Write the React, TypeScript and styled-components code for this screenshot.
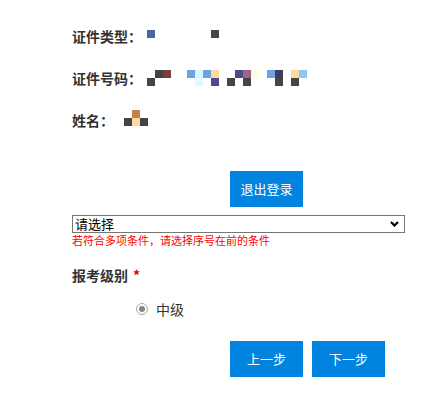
import React from "react";
import styled, { createGlobalStyle } from "styled-components";

const GlobalStyle = createGlobalStyle`
  html, body {
    margin: 0;
    padding: 0;
    background: #ffffff;
  }
  body {
    font-family: "Noto Sans CJK SC", "Noto Sans", sans-serif;
    color: #333333;
  }
  * { box-sizing: border-box; }
`;

const Page = styled.div`
  display: flex;
  flex-direction: column;
  padding: 26px 0 16px 72px;
  width: 442px;
`;

const InfoList = styled.div`
  display: flex;
  flex-direction: column;
  gap: 22px;
`;

const InfoRow = styled.div`
  display: flex;
  align-items: flex-start;
  height: 20px;
`;

const Label = styled.span`
  font-size: 14px;
  font-weight: 700;
  line-height: 20px;
  color: #333333;
  white-space: nowrap;
`;

const Pixels = styled.div<{ $cols: number; $left: number; $top: number }>`
  display: grid;
  grid-template-columns: repeat(${(p) => p.$cols}, 8px);
  grid-auto-rows: 8px;
  margin-left: ${(p) => p.$left}px;
  margin-top: ${(p) => p.$top}px;
`;

const Cell = styled.span<{ $c: number; $r: number; $color: string }>`
  grid-column: ${(p) => p.$c + 1};
  grid-row: ${(p) => p.$r + 1};
  background: ${(p) => p.$color};
`;

const ActionRow = styled.div<{ $top: number }>`
  display: flex;
  gap: 9px;
  padding-left: 158px;
  margin-top: ${(p) => p.$top}px;
`;

const Button = styled.button`
  width: 73px;
  height: 36px;
  border: none;
  padding: 0;
  background: #0084e0;
  color: #ffffff;
  font-family: "Noto Sans CJK SC", sans-serif;
  font-size: 13px;
  line-height: 36px;
  cursor: pointer;
`;

const Select = styled.select`
  margin-top: 8px;
  width: 333px;
  height: 18px;
  border: 1px solid #767676;
  border-radius: 0;
  padding: 0 0 0 2px;
  font-family: "Noto Sans CJK SC", sans-serif;
  font-size: 13px;
  line-height: 16px;
  color: #000000;
  background-color: #ffffff;
  appearance: none;
  -webkit-appearance: none;
  background-image: url("data:image/svg+xml;utf8,<svg xmlns='http://www.w3.org/2000/svg' width='9' height='6' viewBox='0 0 9 6'><polyline points='1,1 4.5,4.5 8,1' fill='none' stroke='black' stroke-width='2.2'/></svg>");
  background-repeat: no-repeat;
  background-position: right 5px center;
  outline: none;
`;

const Hint = styled.div`
  font-size: 11px;
  line-height: 14px;
  color: #ff0000;
  white-space: nowrap;
`;

const SectionTitle = styled.div`
  margin-top: 18px;
  font-size: 14px;
  font-weight: 700;
  line-height: 20px;
  color: #333333;
`;

const Required = styled.span`
  color: #e00000;
  margin-left: 5px;
`;

const RadioRow = styled.label`
  display: flex;
  align-items: center;
  gap: 8px;
  height: 20px;
  margin-top: 14px;
  padding-left: 64px;
  font-size: 14px;
  line-height: 20px;
  color: #333333;
`;

const RadioMark = styled.span`
  width: 12px;
  height: 12px;
  border-radius: 50%;
  border: 1px solid #a8a8a8;
  background: #ffffff;
  display: flex;
  align-items: center;
  justify-content: center;
  &::after {
    content: "";
    width: 6px;
    height: 6px;
    border-radius: 50%;
    background: #858585;
  }
`;

type Px = [number, number, string];

const typeCells: Px[] = [
  [0, 0, "#4b64a2"],
  [8, 0, "#454545"],
];

const idCells: Px[] = [
  [1, 0, "#444444"],
  [2, 0, "#7b3d3d"],
  [5, 0, "#6da3de"],
  [6, 0, "#d5f6ff"],
  [7, 0, "#6da3de"],
  [8, 0, "#fdd9a0"],
  [11, 0, "#4b4a8c"],
  [12, 0, "#a0628a"],
  [13, 0, "#fffbdc"],
  [15, 0, "#6da3de"],
  [16, 0, "#3d3d5c"],
  [18, 0, "#fdd9a0"],
  [19, 0, "#8cc4f8"],
  [0, 1, "#444444"],
  [6, 1, "#e0fbff"],
  [8, 1, "#4b4a8c"],
  [10, 1, "#444444"],
  [12, 1, "#444444"],
  [16, 1, "#444444"],
  [18, 1, "#444444"],
];

const nameCells: Px[] = [
  [1, 0, "#c2824a"],
  [0, 1, "#444444"],
  [1, 1, "#fddba0"],
  [2, 1, "#444444"],
];

const PixelValue = ({ cells, cols, left, top }: { cells: Px[]; cols: number; left: number; top: number }) => (
  <Pixels $cols={cols} $left={left} $top={top}>
    {cells.map(([c, r, color], i) => (
      <Cell key={i} $c={c} $r={r} $color={color} />
    ))}
  </Pixels>
);

export default function App() {
  return (
    <>
      <GlobalStyle />
      <Page>
        <InfoList>
          <InfoRow>
            <Label>证件类型：</Label>
            <PixelValue cells={typeCells} cols={9} left={5} top={4} />
          </InfoRow>
          <InfoRow>
            <Label>证件号码：</Label>
            <PixelValue cells={idCells} cols={20} left={5} top={2} />
          </InfoRow>
          <InfoRow>
            <Label>姓名：</Label>
            <PixelValue cells={nameCells} cols={3} left={10} top={0} />
          </InfoRow>
        </InfoList>

        <ActionRow $top={41}>
          <Button type="button">退出登录</Button>
        </ActionRow>

        <Select defaultValue="">
          <option value="">请选择</option>
        </Select>
        <Hint>若符合多项条件，请选择序号在前的条件</Hint>

        <SectionTitle>
          报考级别<Required>*</Required>
        </SectionTitle>

        <RadioRow>
          <RadioMark />
          中级
        </RadioRow>

        <ActionRow $top={22}>
          <Button type="button">上一步</Button>
          <Button type="button">下一步</Button>
        </ActionRow>
      </Page>
    </>
  );
}
